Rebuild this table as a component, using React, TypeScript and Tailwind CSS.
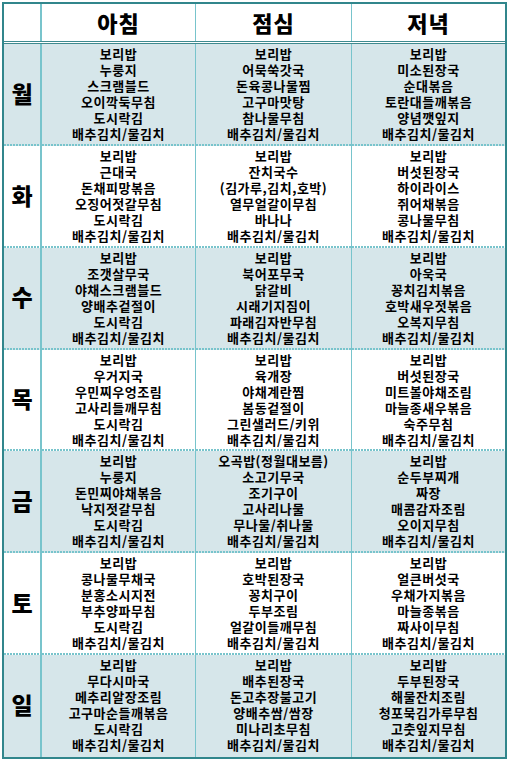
const DAYS: { day: string; meals: string[][] }[] = [
  {
    day: "월",
    meals: [
      ["보리밥", "누룽지", "스크램블드", "오이깍둑무침", "도시락김", "배추김치/물김치"],
      ["보리밥", "어묵쑥갓국", "돈육콩나물찜", "고구마맛탕", "참나물무침", "배추김치/물김치"],
      ["보리밥", "미소된장국", "순대볶음", "토란대들깨볶음", "양념깻잎지", "배추김치/물김치"],
    ],
  },
  {
    day: "화",
    meals: [
      ["보리밥", "근대국", "돈채피망볶음", "오징어젓갈무침", "도시락김", "배추김치/물김치"],
      ["보리밥", "잔치국수", "(김가루,김치,호박)", "열무얼갈이무침", "바나나", "배추김치/물김치"],
      ["보리밥", "버섯된장국", "하이라이스", "쥐어채볶음", "콩나물무침", "배추김치/물김치"],
    ],
  },
  {
    day: "수",
    meals: [
      ["보리밥", "조갯살무국", "야채스크램블드", "양배추겉절이", "도시락김", "배추김치/물김치"],
      ["보리밥", "북어포무국", "닭갈비", "시래기지짐이", "파래김자반무침", "배추김치/물김치"],
      ["보리밥", "아욱국", "꽁치김치볶음", "호박새우젓볶음", "오복지무침", "배추김치/물김치"],
    ],
  },
  {
    day: "목",
    meals: [
      ["보리밥", "우거지국", "우민찌우엉조림", "고사리들깨무침", "도시락김", "배추김치/물김치"],
      ["보리밥", "육개장", "야채계란찜", "봄동겉절이", "그린샐러드/키위", "배추김치/물김치"],
      ["보리밥", "버섯된장국", "미트볼야채조림", "마늘종새우볶음", "숙주무침", "배추김치/물김치"],
    ],
  },
  {
    day: "금",
    meals: [
      ["보리밥", "누룽지", "돈민찌야채볶음", "낙지젓갈무침", "도시락김", "배추김치/물김치"],
      ["오곡밥(정월대보름)", "소고기무국", "조기구이", "고사리나물", "무나물/취나물", "배추김치/물김치"],
      ["보리밥", "순두부찌개", "짜장", "매콤감자조림", "오이지무침", "배추김치/물김치"],
    ],
  },
  {
    day: "토",
    meals: [
      ["보리밥", "콩나물무채국", "분홍소시지전", "부추양파무침", "도시락김", "배추김치/물김치"],
      ["보리밥", "호박된장국", "꽁치구이", "두부조림", "얼갈이들깨무침", "배추김치/물김치"],
      ["보리밥", "얼큰버섯국", "우채가지볶음", "마늘종볶음", "짜사이무침", "배추김치/물김치"],
    ],
  },
  {
    day: "일",
    meals: [
      ["보리밥", "무다시마국", "메추리알장조림", "고구마순들깨볶음", "도시락김", "배추김치/물김치"],
      ["보리밥", "배추된장국", "돈고추장불고기", "양배추쌈/쌈장", "미나리초무침", "배추김치/물김치"],
      ["보리밥", "두부된장국", "해물잔치조림", "청포묵김가루무침", "고춧잎지무침", "배추김치/물김치"],
    ],
  },
];

const FONT = "font-['Noto_Sans_CJK_KR','Noto_Sans',sans-serif]";
const DOTS =
  "bg-[image:repeating-linear-gradient(90deg,#78c4cc_0_2px,transparent_2px_3px)] bg-[length:100%_2px] bg-bottom bg-no-repeat bg-clip-padding";
const COLS = "grid grid-cols-[38px_154px_156px_1fr]";

export default function App() {
  return (
    <div className={`bg-white w-[509px] h-[759px] pt-[2px] pl-[2px] ${FONT}`}>
      <div className="w-[505px] h-[757px] border-2 border-[#31868c] flex flex-col">
        {/* header */}
        <div className={`${COLS} h-[37px] shrink-0`}>
          <div className="border-r-2 border-[#78c4cc]" />
          {["아침", "점심", "저녁"].map((h, i) => (
            <div
              key={h}
              className={`flex items-center justify-center text-[22px] font-black text-black tracking-[1px] ${
                i < 2 ? "border-r border-[#78c4cc]" : ""
              }`}
            >
              {h}
            </div>
          ))}
        </div>
        <div className="h-[3px] shrink-0 border-y border-[#3e8a8f]" />

        {DAYS.map((d, r) => {
          const bg = r % 2 === 0 ? "bg-[#d6e6ea]" : "bg-white";
          const dots = r < DAYS.length - 1 ? DOTS : "";
          return (
            <div key={d.day} className={`${COLS} flex-1 ${bg}`}>
              <div
                className={`flex items-center justify-center pb-[4px] border-r-2 border-[#78c4cc] text-[23px] font-black text-black ${dots}`}
              >
                {d.day}
              </div>
              {d.meals.map((items, i) => (
                <div
                  key={i}
                  className={`flex items-center justify-center pb-[2px] ${dots} ${
                    i < 2 ? "border-r border-[#78c4cc]" : ""
                  }`}
                >
                  <p className="whitespace-pre-line text-center text-[13px] leading-[16px] font-bold tracking-[0.5px] text-black">
                    {items.join("\n")}
                  </p>
                </div>
              ))}
            </div>
          );
        })}
      </div>
    </div>
  );
}
